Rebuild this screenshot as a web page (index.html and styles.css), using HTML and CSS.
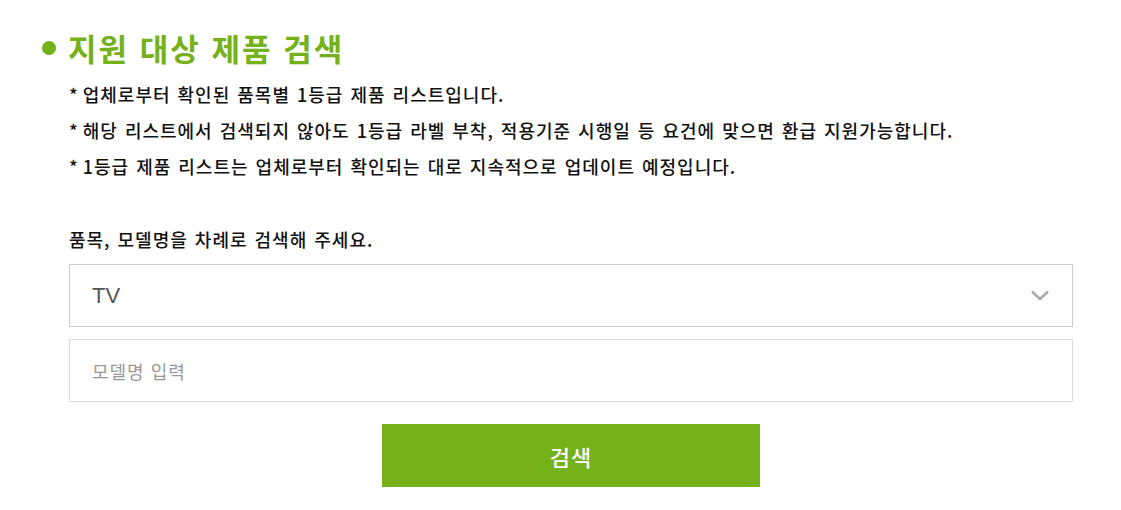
FILE: index.html
```html
<!DOCTYPE html>
<html lang="ko">
<head>
    <meta charset="UTF-8">
    <meta name="viewport" content="width=device-width, initial-scale=1.0">
    <title>지원 대상 제품 검색</title>
    <link rel="stylesheet" href="styles.css">
</head>
<body>
    <!-- 지원 대상 제품 검색 -->
    <div class="search-section">
        <h2 class="section-title">지원 대상 제품 검색</h2>

        <ul class="notice-list">
            <li>업체로부터 확인된 품목별 1등급 제품 리스트입니다.</li>
            <li>해당 리스트에서 검색되지 않아도 1등급 라벨 부착, 적용기준 시행일 등 요건에 맞으면 환급 지원가능합니다.</li>
            <li>1등급 제품 리스트는 업체로부터 확인되는 대로 지속적으로 업데이트 예정입니다.</li>
        </ul>

        <div class="search-form">
            <p class="search-guide">품목, 모델명을 차례로 검색해 주세요.</p>

            <div class="select-box">
                <span class="select-value">TV</span>
                <svg class="select-arrow" width="18" height="11" viewBox="0 0 18 11">
                    <path d="M1 1.5 L9 9 L17 1.5" fill="none" stroke="#aaa" stroke-width="2.4"/>
                </svg>
            </div>

            <input type="text" class="model-input" placeholder="모델명 입력">

            <div class="button-row">
                <button class="search-button">검색</button>
            </div>
        </div>
    </div>
</body>
</html>
```

FILE: styles.css
```css
body {
    font-family: "Noto Sans CJK KR", "Noto Sans", sans-serif;
    background-color: #fff;
    color: #111;
    margin: 0;
    padding: 0;
}

.search-section {
    padding: 26px 48px 0 42px;
}

.section-title {
    display: flex;
    align-items: center;
    margin: 0;
    font-size: 31px;
    font-weight: 700;
    line-height: 44px;
    color: #74b11a;
    letter-spacing: 2px;
}

.section-title::before {
    content: "";
    width: 14px;
    height: 14px;
    margin-right: 12px;
    border-radius: 50%;
    background-color: #74b11a;
}

.notice-list {
    list-style: none;
    margin: 6px 0 0 27px;
    padding: 0;
}

.notice-list li {
    font-size: 18px;
    font-weight: 500;
    line-height: 36px;
    letter-spacing: 1px;
    word-spacing: 1px;
}

.notice-list li::before {
    content: "*";
    margin-right: 4px;
}

.search-form {
    margin: 42px 0 0 27px;
}

.search-guide {
    margin: 0 0 12px;
    font-size: 18px;
    font-weight: 500;
    line-height: 26px;
    letter-spacing: 1px;
    word-spacing: 1px;
}

.select-box {
    display: flex;
    align-items: center;
    justify-content: space-between;
    box-sizing: border-box;
    height: 63px;
    padding: 0 23px 0 22px;
    border: 1px solid #ccc;
}

.select-value {
    font-family: "Liberation Sans", Arial, sans-serif;
    font-size: 22px;
    color: #555;
}

.model-input {
    display: block;
    box-sizing: border-box;
    width: 100%;
    height: 63px;
    margin-top: 12px;
    padding: 0 22px;
    border: 1px solid #ddd;
    outline: none;
    font-family: inherit;
    font-size: 18px;
    letter-spacing: 1px;
    color: #333;
}

.model-input::placeholder {
    color: #999;
}

.button-row {
    display: flex;
    justify-content: center;
    margin-top: 22px;
}

.search-button {
    width: 378px;
    height: 63px;
    border: none;
    background-color: #74b11a;
    color: #fff;
    font-family: inherit;
    font-size: 22px;
    font-weight: 500;
    letter-spacing: 1px;
    cursor: pointer;
}
```
